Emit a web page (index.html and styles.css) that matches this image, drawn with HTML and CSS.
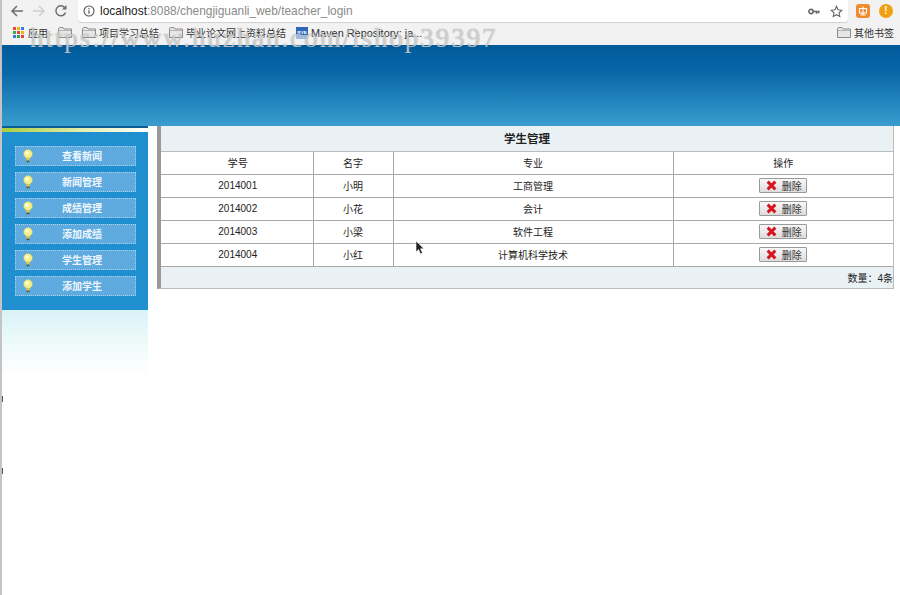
FILE: index.html
```html
<!DOCTYPE html>
<html lang="zh">
<head>
<meta charset="utf-8">
<title>学生管理</title>
<link rel="stylesheet" href="styles.css">
</head>
<body>
<svg class="defs" width="0" height="0" aria-hidden="true">
  <defs>
    <symbol id="bulb" viewBox="0 0 12 14">
      <circle cx="6" cy="5" r="4.2" fill="#f6f08a" stroke="#e8d860" stroke-width=".6"/>
      <circle cx="5" cy="4" r="1.7" fill="#fffde0"/>
      <path d="M4 9.2h4l-.5 2.6h-3z" fill="#d9c94e"/>
      <path d="M4.4 11.6h3.2v1.6H4.4z" fill="#555"/>
    </symbol>
    <symbol id="folder" viewBox="0 0 14 11">
      <path d="M.5 2V10.500H13.500V2H6L5 .5H1.500Z" fill="#e6e6e6" stroke="#8c8c8c"/>
      <path d="M1 3.500H13" stroke="#b5b5b5"/>
    </symbol>
    <symbol id="cross" viewBox="0 0 12 12">
      <path d="M1.800 1.800 10.200 10.200M10.200 1.800 1.800 10.200" stroke="#d8141c" stroke-width="3.200"/>
    </symbol>
  </defs>
</svg>

<header class="browser">
  <div class="toolbar">
    <div class="nav">
      <svg class="nav-icon" viewBox="0 0 14 14"><path d="M13 7H2M7 2 2 7l5 5" fill="none" stroke="#6e6e6e" stroke-width="1.500"/></svg>
      <svg class="nav-icon" viewBox="0 0 14 14"><path d="M1 7h11M7 2l5 5-5 5" fill="none" stroke="#cfcfcf" stroke-width="1.500"/></svg>
      <svg class="nav-icon" viewBox="0 0 14 14"><path d="M11.600 8.500A5 5 0 1 1 10.700 3.600" fill="none" stroke="#6e6e6e" stroke-width="1.500"/><path d="M12.500 1v4.500H8z" fill="#6e6e6e"/></svg>
    </div>
    <div class="omnibox">
      <svg class="info" viewBox="0 0 12 12"><circle cx="6" cy="6" r="5" fill="none" stroke="#555" stroke-width="1.100"/><path d="M6 5.200v3.600M6 3v1.200" stroke="#555" stroke-width="1.200"/></svg>
      <span class="url"><span class="host">localhost</span>:8088/chengjiguanli_web/teacher_login</span>
      <svg class="omni-icon key" viewBox="0 0 14 10"><circle cx="3.500" cy="5" r="2.500" fill="none" stroke="#666" stroke-width="1.800"/><path d="M6 5h7.500M10 5v2.500M12.500 5v2" stroke="#666" stroke-width="1.800"/></svg>
      <svg class="omni-icon star" viewBox="0 0 14 14"><path d="m7 1.500 1.700 3.700 4 .5-3 2.700.8 4L7 10.400l-3.500 2 .8-4-3-2.700 4-.5z" fill="none" stroke="#666" stroke-width="1.200"/></svg>
    </div>
    <div class="extensions">
      <span class="ext ext-orange"><svg viewBox="0 0 14 14"><rect width="14" height="14" rx="3" fill="#f08a30"/><path d="M3.500 4.500h7v4.500h-7zM7 2.500v8M4.500 11h5" fill="none" stroke="#fff" stroke-width="1.100"/></svg></span>
      <span class="ext ext-alert">!</span>
    </div>
  </div>
  <nav class="bookmarks">
    <span class="bm"><svg class="apps" viewBox="0 0 11 11"><g><rect width="3" height="3" fill="#e8453c"/><rect x="4" width="3" height="3" fill="#f4b400"/><rect x="8" width="3" height="3" fill="#3b78e7"/><rect y="4" width="3" height="3" fill="#34a853"/><rect x="4" y="4" width="3" height="3" fill="#e8453c"/><rect x="8" y="4" width="3" height="3" fill="#f4b400"/><rect y="8" width="3" height="3" fill="#3b78e7"/><rect x="4" y="8" width="3" height="3" fill="#34a853"/><rect x="8" y="8" width="3" height="3" fill="#e8453c"/></g></svg>应用</span>
    <span class="bm"><svg class="folder"><use href="#folder"/></svg></span>
    <span class="bm"><svg class="folder"><use href="#folder"/></svg>项目学习总结</span>
    <span class="bm"><svg class="folder"><use href="#folder"/></svg>毕业论文网上资料总结</span>
    <span class="bm"><svg class="mvn" viewBox="0 0 12 12"><rect width="12" height="12" fill="#2f66b5"/><rect y="8" width="12" height="4" fill="#9bbde6"/><path d="M2 7V4l1 2 1-2v3M5.500 4l1 3 1-3M8.500 7V4l1.500 3V4" fill="none" stroke="#fff" stroke-width=".7"/></svg><span class="bm-latin">Maven Repository: ja...</span></span>
    <span class="bm bm-right"><svg class="folder"><use href="#folder"/></svg>其他书签</span>
  </nav>
</header>

<div class="banner"></div>

<main class="page">
  <aside class="sidebar">
    <div class="side-top"></div>
    <ul class="menu">
      <li class="menu-item"><svg class="bulb"><use href="#bulb"/></svg><span>查看新闻</span></li>
      <li class="menu-item"><svg class="bulb"><use href="#bulb"/></svg><span>新闻管理</span></li>
      <li class="menu-item"><svg class="bulb"><use href="#bulb"/></svg><span>成绩管理</span></li>
      <li class="menu-item"><svg class="bulb"><use href="#bulb"/></svg><span>添加成绩</span></li>
      <li class="menu-item"><svg class="bulb"><use href="#bulb"/></svg><span>学生管理</span></li>
      <li class="menu-item"><svg class="bulb"><use href="#bulb"/></svg><span>添加学生</span></li>
    </ul>
    <div class="side-fade"></div>
  </aside>

  <section class="panel">
    <table class="grid">
      <colgroup>
        <col class="c1"><col class="c2"><col class="c3"><col class="c4">
      </colgroup>
      <thead>
        <tr class="title-row"><th colspan="4">学生管理</th></tr>
        <tr class="head-row"><td>学号</td><td>名字</td><td>专业</td><td>操作</td></tr>
      </thead>
      <tbody>
        <tr><td>2014001</td><td>小明</td><td>工商管理</td><td><button class="del"><svg class="cross"><use href="#cross"/></svg>删除</button></td></tr>
        <tr><td>2014002</td><td>小花</td><td>会计</td><td><button class="del"><svg class="cross"><use href="#cross"/></svg>删除</button></td></tr>
        <tr><td>2014003</td><td>小梁</td><td>软件工程</td><td><button class="del"><svg class="cross"><use href="#cross"/></svg>删除</button></td></tr>
        <tr><td>2014004</td><td>小红</td><td>计算机科学技术</td><td><button class="del"><svg class="cross"><use href="#cross"/></svg>删除</button></td></tr>
      </tbody>
      <tfoot>
        <tr class="foot-row"><td colspan="4">数量：4条</td></tr>
      </tfoot>
    </table>
  </section>
</main>

<div class="watermark">https://www.huzhan.com/ishop39397</div>
<span class="edge-mark edge-mark-a"></span>
<span class="edge-mark edge-mark-b"></span>
<svg class="cursor" viewBox="0 0 10 15"><path d="M1 1v11l2.500-2.400L5.500 14l2-1-2-4.200H9z" fill="#222" stroke="#fff" stroke-width=".6"/></svg>
</body>
</html>
```
FILE: styles.css
```css
* { box-sizing: border-box; }
html, body { margin: 0; padding: 0; }
body {
  width: 900px;
  height: 595px;
  overflow: hidden;
  background: #fff;
  font-family: "Liberation Sans", "Noto Sans CJK SC", sans-serif;
  color: #222;
  border-left: 2px solid #c4c4c4;
  position: relative;
}
.defs { position: absolute; }

.browser { margin-left: -2px; background: #f2f2f2; height: 45px; }
.toolbar { height: 22px; display: flex; align-items: center; padding-left: 10px; }
.nav { display: flex; gap: 8px; width: 66px; flex: none; }
.nav-icon { width: 14px; height: 14px; flex: none; }
.omnibox {
  width: 770px;
  height: 22px;
  flex: none;
  background: #fff;
  border-radius: 0 0 4px 4px;
  display: flex;
  align-items: center;
  padding-left: 5px;
  font-size: 11.900px;
  box-shadow: 0 1px 1px #d0d0d0;
  margin-left: 2px;
}
.info { width: 12px; height: 12px; margin-right: 5px; flex: none; }
.url { color: #8a8a8a; flex: 1; }
.host { color: #222; }
.omni-icon { flex: none; }
.key { width: 12px; height: 9px; margin-right: 10px; }
.star { width: 13px; height: 13px; margin-right: 5px; }
.extensions { display: flex; align-items: center; gap: 9px; margin-left: 8px; }
.ext { width: 14px; height: 14px; display: block; }
.ext svg { display: block; width: 14px; height: 14px; }
.ext-alert {
  border-radius: 50%;
  background: #f0a010;
  color: #fff;
  font-size: 10px;
  font-weight: bold;
  line-height: 14px;
  text-align: center;
}

.bookmarks {
  height: 23px;
  display: flex;
  align-items: center;
  gap: 10px;
  padding: 0 6px 2px 13px;
  font-size: 10px;
  color: #333;
}
.bm { display: flex; align-items: center; gap: 3px; white-space: nowrap; }
.bm:first-child { gap: 4px; }
.bm-latin { font-size: 10.900px; }
.bm-right { margin-left: auto; }
.apps { width: 11px; height: 11px; }
.folder { width: 14px; height: 11px; }
.mvn { width: 12px; height: 12px; }

.banner {
  margin-left: -2px;
  height: 81px;
  background: linear-gradient(to bottom, #005b9b 0%, #0a68a8 35%, #3a9dcf 100%);
}

.page { display: flex; align-items: flex-start; }
.sidebar { width: 146px; flex: none; }
.side-top {
  height: 6px;
  border-top: 2px solid #0b5c90;
  background: linear-gradient(to right, #a9cf3e 0%, #e3edb0 55%, #ffffff 100%);
}
.menu {
  list-style: none;
  margin: 0;
  padding: 14px 13px;
  height: 178px;
  background: #1f8fd0;
  display: flex;
  flex-direction: column;
  gap: 6px;
}
.menu-item {
  height: 20px;
  width: 121px;
  flex: none;
  display: flex;
  align-items: center;
  background: #5fabe0;
  border: 1px dotted #a9d2ee;
  color: #f0f7fc;
  font-size: 10px;
  font-weight: bold;
  padding-left: 6px;
}
.menu-item span { margin: 0 0 2px 28px; }
.bulb { width: 12px; height: 14px; flex: none; }
.side-fade { height: 66px; background: linear-gradient(to bottom, #d9f3f8 0%, #eefafa 50%, #ffffff 100%); }

.panel {
  margin-left: 9px;
  width: 737px;
  border-left: 4px solid #999;
  border-bottom: 1px solid #bbb;
  border-right: 1px solid #bbb;
}
.grid {
  width: 100%;
  table-layout: fixed;
  border-collapse: collapse;
  font-size: 10px;
  color: #222;
}
.c1 { width: 152px; }
.c2 { width: 80px; }
.c3 { width: 280px; }
.grid td, .grid th {
  padding: 0;
  text-align: center;
  height: 23px;
  border-bottom: 1px solid #a8a8a8;
  border-left: 1px solid #a8a8a8;
}
.grid td:first-child { border-left: 0; padding-left: 2px; }
.title-row th {
  height: 25px;
  font-size: 11.500px;
  background: #e9f1f5;
  border-left: 0;
  border-bottom: 1px solid #bbb;
}
.grid .foot-row td {
  height: 22px;
  background: #e9f1f5;
  text-align: right;
  border-bottom: 0;
}
.del {
  width: 48px;
  height: 15px;
  padding: 0 0 0 1px;
  font: inherit;
  color: #333;
  background: linear-gradient(to bottom, #f8f8f8, #dcdcdc);
  border: 1px solid #9a9a9a;
  border-radius: 1px;
  display: inline-flex;
  align-items: center;
  justify-content: center;
  gap: 5px;
  vertical-align: middle;
}
.cross { width: 11px; height: 11px; }

.watermark {
  position: absolute;
  left: 28px;
  top: 23px;
  font-family: "Liberation Serif", serif;
  font-size: 27px;
  letter-spacing: 1.950px;
  color: rgba(255, 255, 255, .6);
  text-shadow: 0 0 1px rgba(90, 90, 90, .75);
  white-space: nowrap;
}
.edge-mark { position: absolute; left: -2px; width: 3px; height: 6px; background: #555; }
.edge-mark-a { top: 396px; }
.edge-mark-b { top: 468px; }
.cursor { position: absolute; left: 413px; top: 240px; width: 10px; height: 15px; }
```
